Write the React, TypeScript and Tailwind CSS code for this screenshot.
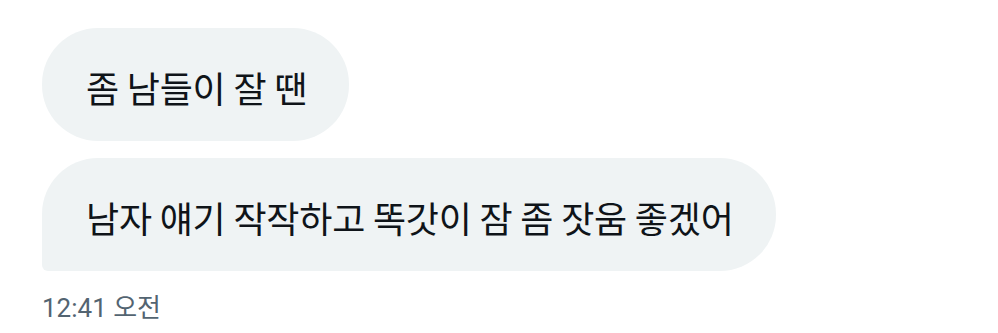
const messages = [
  { text: '좀 남들이 잘 땐', corner: 'rounded-[56px]' },
  { text: '남자 얘기 작작하고 똑갓이 잠 좀 잣움 좋겠어', corner: 'rounded-[56px] rounded-bl-[6px]' },
];

const App = () => {
  return (
    <div className="w-[998px] h-[333px] bg-white pl-[42px] pt-[28px] overflow-hidden">
      <div className="flex flex-col items-start gap-[17px]">
        {messages.map((msg, index) => (
          <div
            key={index}
            className={`h-[113px] flex items-center pl-[44px] pr-[42px] bg-[#eff3f4] text-[#0f1419] text-[36px] tracking-[-0.2px] ${msg.corner}`}
            style={{ fontFamily: '"Noto Sans CJK KR", sans-serif' }}
          >
            <span className="leading-none whitespace-nowrap pt-[4px]">{msg.text}</span>
          </div>
        ))}
      </div>
      <p
        className="mt-[24px] text-[26px] leading-none text-[#536471]"
        style={{ fontFamily: 'Roboto, "Noto Sans CJK KR", sans-serif' }}
      >
        12:41 오전
      </p>
    </div>
  );
};

export default App;
